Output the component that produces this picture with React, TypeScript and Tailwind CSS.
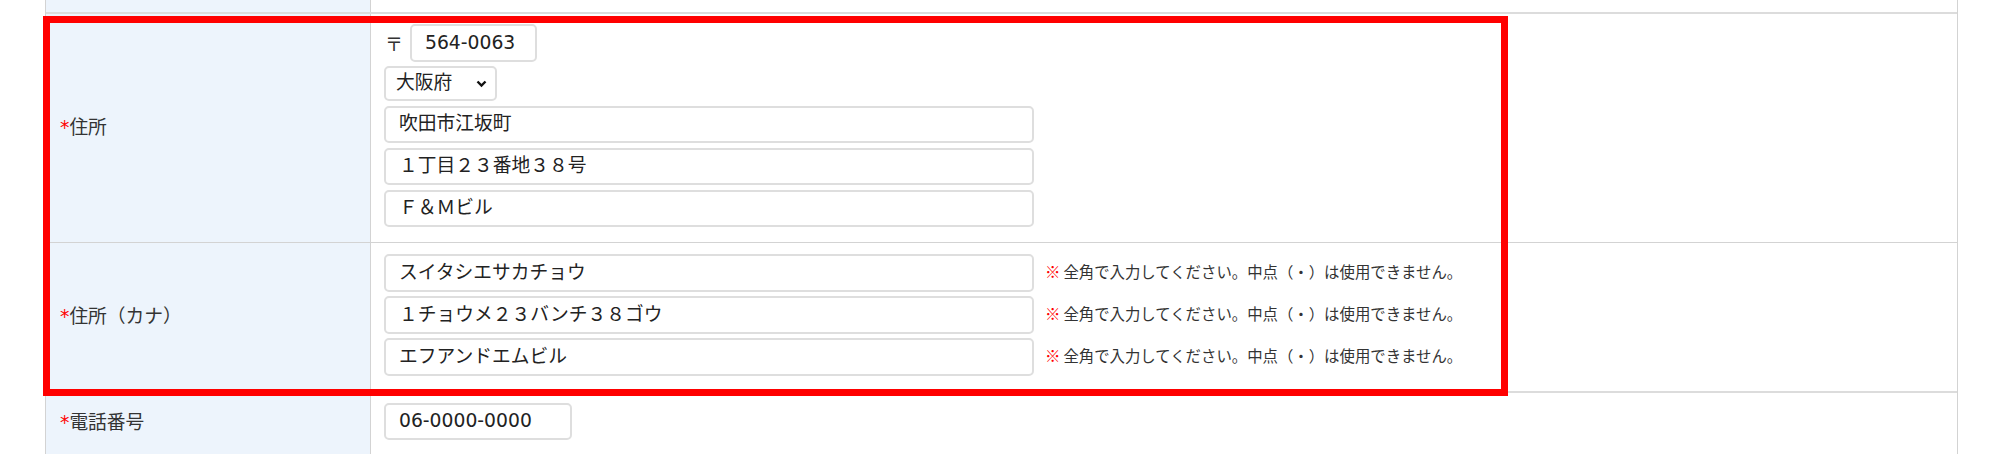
const font = {
  fontFamily: '"DejaVu Sans", "Noto Sans CJK JP", sans-serif',
};

const KANA_NOTE = "全角で入力してください。中点（・）は使用できません。";

type FieldProps = {
  value: string;
  width?: string;
  height?: string;
};

const TextField = ({ value, width = "w-[650px]", height = "h-[37px]" }: FieldProps) => {
  return (
    <div
      className={`${width} ${height} flex items-center pl-[13px] border-2 border-[#dedede] rounded-[5px] bg-white text-[18.75px] text-[#222] whitespace-nowrap`}
    >
      {value}
    </div>
  );
};

const Label = ({ text }: { text: string }) => {
  return (
    <div className="w-[325px] shrink-0 flex items-center pl-[14px] bg-[#edf4fc] border-r border-[#d3d3d3] text-[18.75px] text-[#333]">
      <span className="text-[#ff0000]">*</span>
      <span>{text}</span>
    </div>
  );
};

const KanaRow = ({ value }: { value: string }) => {
  return (
    <div className="flex items-center">
      <TextField value={value} height="h-[38px]" />
      <p className="ml-[11px] text-[15.4px] text-[#333] whitespace-nowrap">
        <span className="text-[#ff0000] mr-[3px] font-bold [font-family:'Noto_Sans_CJK_JP',sans-serif]">※</span>
        {KANA_NOTE}
      </p>
    </div>
  );
};

const App = (): JSX.Element => {
  return (
    <div className="relative w-[2000px] h-[455px] overflow-hidden bg-white" style={font}>
      <div className="ml-[45px] w-[1913px] border-x border-[#d3d3d3]">
        {/* previous row (cut off) */}
        <div className="flex h-[14px] border-b-2 border-[#dcdcdc]">
          <div className="w-[325px] shrink-0 bg-[#edf4fc] border-r border-[#d3d3d3]" />
          <div className="flex-1" />
        </div>

        {/* 住所 */}
        <div className="flex border-b border-[#d3d3d3]">
          <Label text="住所" />
          <div className="flex-1 flex flex-col items-start pl-[13px] pt-[10px] pb-[15px]">
            <div className="flex items-center gap-[7px]">
              <span className="text-[18px] text-[#333] pl-[1px] [font-family:'Noto_Sans_CJK_JP',sans-serif]">〒</span>
              <TextField value="564-0063" width="w-[127px]" height="h-[38px]" />
            </div>
            <div className="mt-[4px] w-[113px] h-[35px] flex items-center justify-between pl-[10px] pr-[8px] border-2 border-[#dedede] rounded-[5px] text-[18.75px] text-[#222]">
              <span>大阪府</span>
              <svg width="11" height="8" viewBox="0 0 11 8" fill="none">
                <path d="M1.5 1.5l4 4 4-4" stroke="#111" strokeWidth="2.4" />
              </svg>
            </div>
            <div className="mt-[5px] flex flex-col gap-[5px]">
              <TextField value="吹田市江坂町" />
              <TextField value="１丁目２３番地３８号" />
              <TextField value="Ｆ＆Ｍビル" />
            </div>
          </div>
        </div>

        {/* 住所（カナ） */}
        <div className="flex border-b-2 border-[#dcdcdc]">
          <Label text="住所（カナ）" />
          <div className="flex-1 flex flex-col gap-[4px] pl-[13px] pt-[11px] pb-[15px]">
            <KanaRow value="スイタシエサカチョウ" />
            <KanaRow value="１チョウメ２３バンチ３８ゴウ" />
            <KanaRow value="エフアンドエムビル" />
          </div>
        </div>

        {/* 電話番号 */}
        <div className="flex h-[61px]">
          <Label text="電話番号" />
          <div className="flex-1 pl-[13px] pt-[10px]">
            <TextField value="06-0000-0000" width="w-[188px]" />
          </div>
        </div>
      </div>

      {/* annotation frame */}
      <div className="absolute left-[43px] top-[16px] w-[1465px] h-[380px] border-[7px] border-[#ff0000] pointer-events-none" />
    </div>
  );
};

export default App;
